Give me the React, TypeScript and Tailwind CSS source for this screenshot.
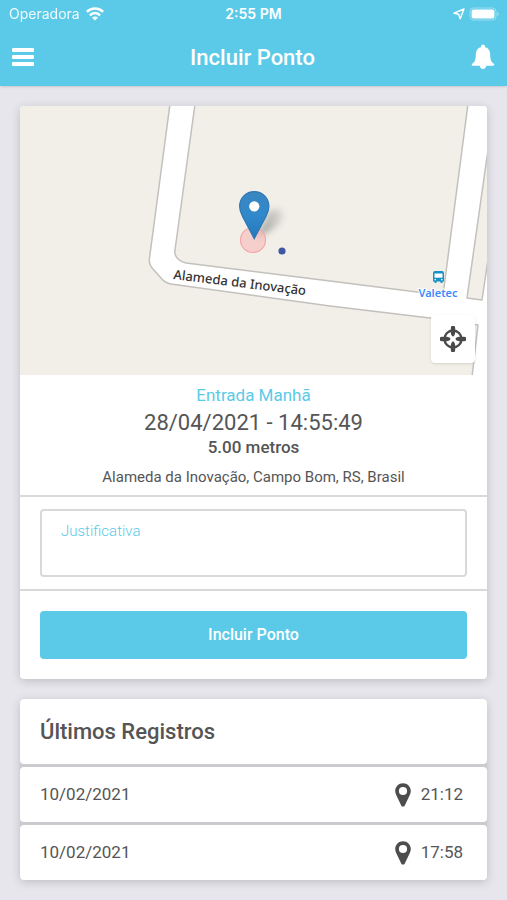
type Registro = {
  id: number;
  data: string;
  hora: string;
};

const registros: Registro[] = [
  { id: 1, data: "10/02/2021", hora: "21:12" },
  { id: 2, data: "10/02/2021", hora: "17:58" },
];

function StatusBar() {
  return (
    <div className="grid grid-cols-3 items-center h-7 px-2 font-[Inter,sans-serif] text-sm">
      <div className="flex items-center gap-1.5 pl-px">
        <span className="opacity-90">Operadora</span>
        <svg className="w-[18px] h-[14px]" viewBox="0 0 18 14" fill="none" stroke="currentColor" strokeWidth="2.4">
          <path d="M.9 4.800C5.400 .3 12.600 .3 17.100 4.800" />
          <path d="M3.900 8.300C6.800 5.300 11.200 5.300 14.100 8.300" />
          <path d="M9 13.500L6 10.500C7.700 9 10.300 9 12 10.500Z" fill="currentColor" stroke="none" />
        </svg>
      </div>
      <span className="text-center font-semibold">2:55 PM</span>
      <div className="flex items-center justify-end gap-1">
        <svg className="w-3 h-3" viewBox="0 0 12 12" fill="none" stroke="currentColor" strokeWidth="1.4" strokeLinejoin="round">
          <path d="M11 1L1 5.200L5.600 6.300L7.200 10.800Z" />
        </svg>
        <svg className="w-[30px] h-[14px]" viewBox="0 0 30 14">
          <rect x="1" y="1" width="26" height="12" rx="3.500" fill="none" stroke="currentColor" strokeOpacity=".4" />
          <rect x="2.600" y="2.600" width="22.800" height="8.800" rx="2" fill="currentColor" />
          <path d="M28.300 5V9Q29.600 8.500 29.600 7T28.300 5Z" fill="currentColor" fillOpacity=".5" />
        </svg>
      </div>
    </div>
  );
}

function Header() {
  return (
    <header className="bg-[#5bcae8] text-white shadow-sm">
      <StatusBar />
      <div className="flex items-center justify-between h-[58px] px-3">
        <button type="button" aria-label="Menu">
          <svg className="w-[22px] h-[18px]" viewBox="0 0 22 18" fill="currentColor">
            <rect x="0" y="0" width="22" height="4" rx="1" />
            <rect x="0" y="7" width="22" height="4" rx="1" />
            <rect x="0" y="14" width="22" height="4" rx="1" />
          </svg>
        </button>
        <h1 className="text-[22px] font-medium">Incluir Ponto</h1>
        <button type="button" aria-label="Notificações">
          <svg className="w-6 h-[26px]" viewBox="0 0 24 26" fill="currentColor">
            <path d="M12 .5C13.100 .5 13.900 1.300 13.900 2.300V3C17.500 4 19.200 7 19.200 10.500C19.200 16 20.300 17.800 22.600 19.600C23.700 20.500 23.400 21.800 22 21.800H15.200C15 23.800 13.800 25 12 25S9 23.800 8.800 21.800H2C.6 21.800 .3 20.500 1.400 19.600C3.700 17.800 4.800 16 4.800 10.500C4.800 7 6.500 4 10.100 3V2.300C10.100 1.300 10.900 .5 12 .5Z" />
          </svg>
        </button>
      </div>
    </header>
  );
}

function Mapa() {
  return (
    <div className="relative">
      <svg className="block w-full h-[269px] rounded-t" viewBox="0 0 467 269" preserveAspectRatio="xMidYMid slice">
        <defs>
          <linearGradient id="pin" x1="0" y1="0" x2="0" y2="1">
            <stop offset="0" stopColor="#3a86c0" />
            <stop offset=".5" stopColor="#3189cb" />
            <stop offset="1" stopColor="#2478bb" />
          </linearGradient>
          <linearGradient id="shade" x1="0" y1="0" x2="1" y2="0">
            <stop offset="0" stopColor="#444" stopOpacity=".75" />
            <stop offset="1" stopColor="#444" stopOpacity=".1" />
          </linearGradient>
          <filter id="blur" x="-50%" y="-50%" width="200%" height="200%">
            <feGaussianBlur stdDeviation="3" />
          </filter>
        </defs>
        <rect width="467" height="269" fill="#f2efe9" />
        <path
          d="M150 -2L129.500 152Q128.500 158 133 163L141 172Q145 177 151 178L310 200L410 212L458 219L452 271H470V140L462 194L447 192L470 30V-2H448L423 189L397 186L310 175L166 157Q161 156 158 153Q154 149 155 144L175 -2Z"
          fill="#fff"
          stroke="#c3c1bd"
          strokeWidth="1.500"
          strokeLinejoin="round"
        />
        <text
          transform="translate(153 173) rotate(7)"
          fill="#333"
          stroke="#fff"
          strokeWidth="2"
          paintOrder="stroke"
          className="font-['Noto_Sans',sans-serif] text-[13px] font-medium"
        >
          Alameda da Inovação
        </text>

        <path d="M236 132L249 106Q256 100 264 106Q266 116 250 125Z" fill="url(#shade)" opacity=".7" filter="url(#blur)" />
        <circle cx="233" cy="134" r="12.500" fill="#f9b4b4" fillOpacity=".55" stroke="#f5a6aa" strokeWidth="1.200" />
        <g transform="translate(219 85) scale(1.22)">
          <path
            d="M12.500 .5C5.800 .5 .5 5.800 .5 12.400C.5 15 1.400 18 3 21L12.500 39L22 21C23.600 18 24.500 15 24.500 12.400C24.500 5.800 19.200 .5 12.500 .5Z"
            fill="url(#pin)"
            stroke="#2f78b3"
          />
          <circle cx="12.500" cy="12.600" r="4.200" fill="#fff" />
        </g>
        <circle cx="262" cy="145" r="3.600" fill="#4058a4" />

        <g fill="#1593c6">
          <path d="M415 165H422Q424 165 424 167V175.500H422.500V177H420.500V175.500H416.500V177H414.500V175.500H413V167Q413 165 415 165Z" />
          <rect x="414.500" y="167.500" width="8" height="4.200" fill="#fff" />
          <path d="M414.500 173H416V174.200H414.500ZM421 173H422.500V174.200H421Z" fill="#fff" />
        </g>
        <text
          x="418"
          y="191"
          textAnchor="middle"
          fill="#3d8bf7"
          stroke="#fff"
          strokeWidth="2"
          paintOrder="stroke"
          className="font-['Noto_Sans',sans-serif] text-[11px] font-semibold"
        >
          Valetec
        </text>
      </svg>
      <button
        type="button"
        aria-label="Centralizar mapa"
        className="absolute right-3 bottom-3 flex items-center justify-center w-11 h-12 rounded bg-white text-[#494949] shadow-sm"
      >
        <svg className="size-[26px]" viewBox="0 0 26 26" fill="none" stroke="currentColor">
          <circle cx="13" cy="13" r="8.500" strokeWidth="2.400" />
          <path d="M13 .8V9M13 17V25.200M.8 13H9M17 13H25.200" strokeWidth="2.800" strokeLinecap="round" />
          <path d="M13 2V7M13 19V24M2 13H7M19 13H24" strokeWidth="4.400" strokeLinecap="round" />
        </svg>
      </button>
    </div>
  );
}

function PinIcon() {
  return (
    <svg className="w-4 h-6" viewBox="0 0 16 24" fill="#4d4d4d">
      <path
        fillRule="evenodd"
        d="M8 .3C3.600 .3 .2 3.700 .2 8C.2 9.500 .6 10.800 1.200 12.100L6.200 22.400C6.900 24 9.100 24 9.800 22.400L14.800 12.100C15.400 10.800 15.800 9.500 15.800 8C15.800 3.700 12.400 .3 8 .3ZM8 3.900A4.100 4.100 0 1 1 8 12.100A4.100 4.100 0 1 1 8 3.900Z"
      />
    </svg>
  );
}

export default function App() {
  return (
    <div className="min-h-screen bg-[#e7e6ed] font-[Roboto,sans-serif] text-[#555]">
      <Header />

      <main className="px-5 py-5">
        <section className="rounded bg-white shadow-[0_2px_10px_rgba(0,0,0,0.18)]">
          <Mapa />
          <div className="pt-2 pb-2 text-center border-b-2 border-[#d9d9db]">
            <p className="text-[17px] leading-6 text-[#5bcae8]">Entrada Manhã</p>
            <p className="text-[22px] leading-8">28/04/2021 - 14:55:49</p>
            <p className="text-[17px] leading-4 font-medium">5.00 metros</p>
            <p className="mt-3 text-[15px] leading-5">Alameda da Inovação, Campo Bom, RS, Brasil</p>
          </div>
          <div className="px-5 py-3 border-b-2 border-[#d9d9db]">
            <textarea
              aria-label="Justificativa"
              placeholder="Justificativa"
              className="block w-full h-[68px] px-[19px] py-2 rounded border-2 border-[#d9d9db] resize-none text-[15px] leading-6 font-light outline-none placeholder:text-[#5bcae8]"
            />
          </div>
          <div className="p-5">
            <button type="button" className="block w-full h-12 rounded bg-[#5bcae8] text-base font-medium text-white">
              Incluir Ponto
            </button>
          </div>
        </section>

        <section className="mt-5 flex flex-col gap-[3px] rounded bg-[#cbcbcf] shadow-[0_2px_10px_rgba(0,0,0,0.18)]">
          <h2 className="flex items-center h-[65px] px-5 rounded bg-white text-[22px] font-medium">Últimos Registros</h2>
          {registros.map((registro) => (
            <div key={registro.id} className="flex items-center justify-between h-[55px] pl-5 pr-6 rounded bg-white text-[17px]">
              <span>{registro.data}</span>
              <div className="flex items-center gap-2.5">
                <PinIcon />
                <span>{registro.hora}</span>
              </div>
            </div>
          ))}
        </section>
      </main>
    </div>
  );
}
